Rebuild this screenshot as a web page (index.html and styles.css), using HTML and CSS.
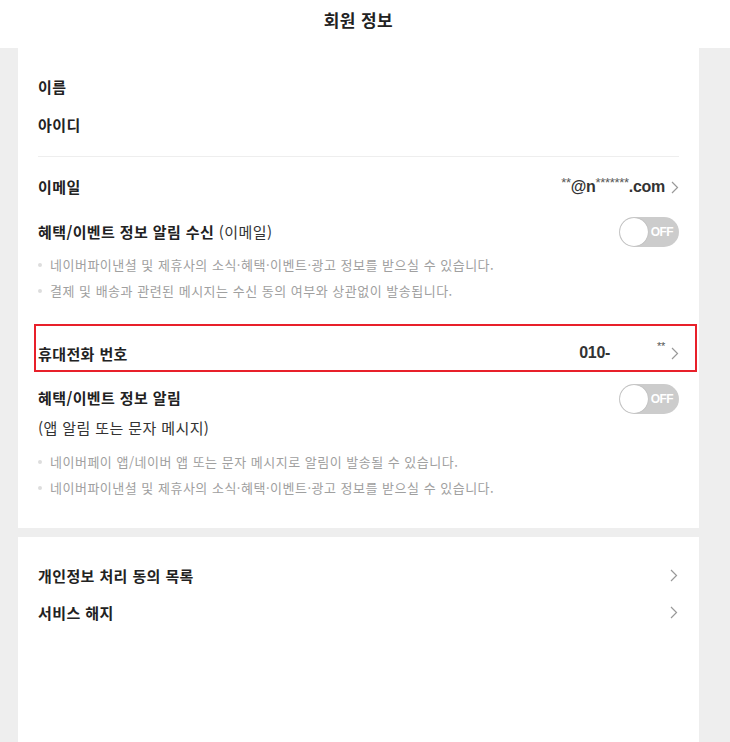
FILE: index.html
```html
<!DOCTYPE html>
<html lang="ko">
<head>
<meta charset="utf-8">
<title>회원 정보</title>
<link rel="stylesheet" href="styles.css">
</head>
<body>
<header class="top">
  <h1 class="top-title">회원 정보</h1>
</header>
<main class="page">
  <section class="card card-first">
    <div class="row"><span class="label">이름</span></div>
    <div class="row"><span class="label">아이디</span></div>
    <hr class="divider">
    <div class="row row-email">
      <span class="label">이메일</span>
      <span class="value"><span class="mask">**</span>@n<span class="mask">*******</span>.com<svg class="chev" viewBox="0 0 8 13" width="8" height="13"><polyline points="1,1 6.5,6.5 1,12" fill="none" stroke="#999" stroke-width="1.2"/></svg></span>
    </div>
    <div class="row row-toggle">
      <span class="label">혜택/이벤트 정보 알림 수신 <span class="light">(이메일)</span></span>
      <span class="toggle"><span class="knob"></span><span class="toggle-text">OFF</span></span>
    </div>
    <ul class="notes">
      <li>네이버파이낸셜 및 제휴사의 소식·혜택·이벤트·광고 정보를 받으실 수 있습니다.</li>
      <li>결제 및 배송과 관련된 메시지는 수신 동의 여부와 상관없이 발송됩니다.</li>
    </ul>
    <div class="row row-phone">
      <span class="label">휴대전화 번호</span>
      <span class="value"><span>010-</span><span class="mask mask-phone">**</span><svg class="chev" viewBox="0 0 8 13" width="8" height="13"><polyline points="1,1 6.5,6.5 1,12" fill="none" stroke="#999" stroke-width="1.2"/></svg></span>
      <span class="highlight"></span>
    </div>
    <div class="block-alarm">
      <div class="alarm-text">
        <div class="label alarm-title">혜택/이벤트 정보 알림</div>
        <div class="alarm-sub">(앱 알림 또는 문자 메시지)</div>
      </div>
      <span class="toggle toggle-alarm"><span class="knob"></span><span class="toggle-text">OFF</span></span>
    </div>
    <ul class="notes notes-alarm">
      <li>네이버페이 앱/네이버 앱 또는 문자 메시지로 알림이 발송될 수 있습니다.</li>
      <li>네이버파이낸셜 및 제휴사의 소식·혜택·이벤트·광고 정보를 받으실 수 있습니다.</li>
    </ul>
  </section>
  <section class="card card-second">
    <div class="row row-link">
      <span class="label">개인정보 처리 동의 목록</span>
      <svg class="chev" viewBox="0 0 8 13" width="8" height="13"><polyline points="1,1 6.5,6.5 1,12" fill="none" stroke="#999" stroke-width="1.2"/></svg>
    </div>
    <div class="row row-link">
      <span class="label">서비스 해지</span>
      <svg class="chev" viewBox="0 0 8 13" width="8" height="13"><polyline points="1,1 6.5,6.5 1,12" fill="none" stroke="#999" stroke-width="1.2"/></svg>
    </div>
  </section>
</main>
</body>
</html>
```

FILE: styles.css
```css
* { box-sizing: border-box; }
html, body {
  margin: 0;
  padding: 0;
  background: #eeeeee;
  font-family: "Noto Sans CJK KR", "Noto Sans", sans-serif;
  color: #222;
}
.top {
  background: #fff;
  height: 48px;
  padding: 0 31px 0 18px;
}
.top-title {
  margin: 0;
  font-size: 17px;
  font-weight: 700;
  line-height: 40px;
  text-align: center;
  color: #222;
  letter-spacing: 0.4px;
}
.page {
  padding: 0 31px 0 18px;
}
.card {
  background: #fff;
  padding: 0 20px;
}
.card-first {
  padding-top: 20px;
  padding-bottom: 27px;
}
.card-second {
  margin-top: 9px;
  padding-top: 20px;
  min-height: 205px;
}
.row {
  display: flex;
  align-items: center;
  justify-content: space-between;
  height: 38px;
}
.label {
  font-size: 15px;
  font-weight: 700;
  line-height: 20px;
  color: #222;
  letter-spacing: 0.4px;
}
.light {
  font-weight: 400;
  color: #333;
}
.divider {
  border: 0;
  border-top: 1px solid #eeeeee;
  margin: 12px 0 11px;
}
.row-toggle {
  height: 40px;
  margin-top: 6px;
}
.value {
  display: flex;
  align-items: center;
  font-family: "Liberation Sans", Arial, sans-serif;
  font-size: 16px;
  font-weight: 700;
  color: #333;
  letter-spacing: -0.3px;
}
.mask {
  font-weight: 400;
  font-size: 13px;
  align-self: flex-start;
  margin-top: -3px;
  color: #555;
}
.mask-phone {
  margin-left: 47px;
  font-size: 11px;
  margin-top: -4px;
}
.chev {
  display: block;
  margin-left: 6px;
  flex: none;
}
.toggle {
  position: relative;
  display: block;
  width: 60px;
  height: 30px;
  border-radius: 15px;
  background: #cccccc;
  flex: none;
}
.knob {
  position: absolute;
  left: 1px;
  top: 1px;
  width: 28px;
  height: 28px;
  border-radius: 50%;
  background: #fff;
  box-shadow: 0 0 1px rgba(0,0,0,0.3);
}
.toggle-text {
  position: absolute;
  right: 6px;
  top: 0;
  line-height: 30px;
  font-family: "Liberation Sans", Arial, sans-serif;
  font-size: 12px;
  font-weight: 700;
  color: #fff;
  letter-spacing: -0.6px;
}
.notes {
  list-style: none;
  margin: 0;
  padding: 0;
}
.notes li {
  position: relative;
  padding-left: 12px;
  font-size: 13px;
  line-height: 26px;
  color: #a0a0a0;
  letter-spacing: 0.5px;
}
.notes li::before {
  content: "";
  position: absolute;
  left: 0;
  top: 11px;
  width: 4px;
  height: 4px;
  border-radius: 50%;
  background: #dddddd;
}
.row-phone {
  position: relative;
  margin-top: 20px;
  height: 48px;
  align-items: flex-start;
  padding-top: 20px;
}
.highlight {
  position: absolute;
  left: -4px;
  right: -18px;
  top: 0;
  bottom: 0;
  border: 2px solid #e8202a;
  pointer-events: none;
}
.block-alarm {
  display: flex;
  justify-content: space-between;
  align-items: flex-start;
  margin-top: 11px;
}
.alarm-title {
  line-height: 30px;
}
.alarm-sub {
  font-size: 15px;
  line-height: 30px;
  color: #333;
  letter-spacing: 0.4px;
}
.toggle-alarm {
  margin-top: 1px;
}
.notes-alarm {
  margin-top: 6px;
}
.row-link {
  height: 37px;
}
.row-link .chev {
  margin-right: 1px;
}
```
